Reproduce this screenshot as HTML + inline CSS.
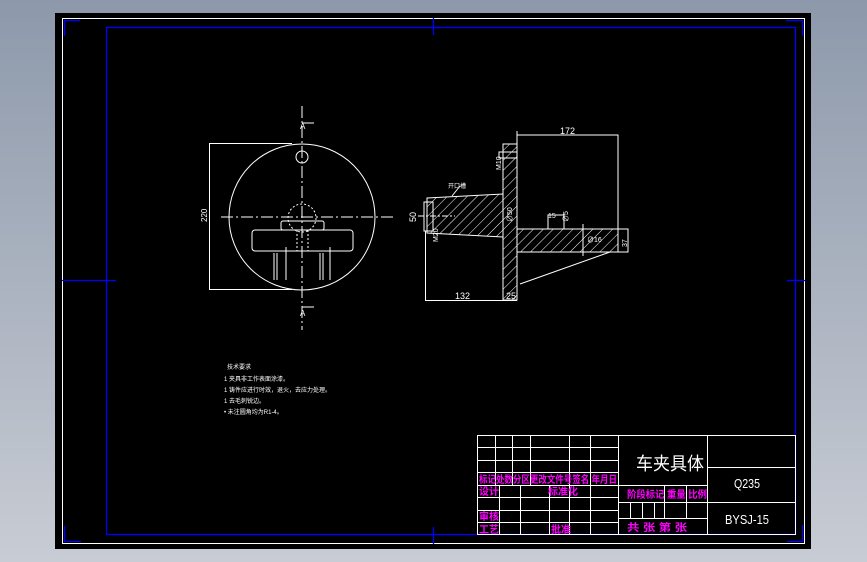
<!DOCTYPE html>
<html><head><meta charset="utf-8"><style>
html,body{margin:0;padding:0;width:867px;height:562px;overflow:hidden;background:linear-gradient(#8d99ab,#c8ccd4);}
svg{position:absolute;left:0;top:0}
text{font-family:"Liberation Sans","Noto Sans CJK SC",sans-serif}
</style></head><body>
<svg width="867" height="562" viewBox="0 0 867 562">
<defs>
<pattern id="h" patternUnits="userSpaceOnUse" width="7" height="7" patternTransform="rotate(45)">
<line x1="0" y1="0" x2="0" y2="7" stroke="#fff" stroke-width="1"/>
</pattern>
</defs>
<rect x="55" y="13" width="756" height="536" fill="#000"/>
<rect x="62.5" y="18.5" width="742" height="525" fill="none" stroke="#fff" stroke-width="1"/>
<rect x="106.5" y="27.5" width="689" height="507" fill="none" stroke="#0000ff" stroke-width="1.3"/>
<g stroke="#0000ff" stroke-width="1.3" fill="none">
<polyline points="80,20.5 64.5,20.5 64.5,36"/>
<polyline points="786,20.5 802.5,20.5 802.5,36"/>
<polyline points="64.5,526 64.5,541.5 81,541.5"/>
<polyline points="802.5,525 802.5,541.5 787,541.5"/>
<line x1="433.5" y1="18" x2="433.5" y2="35"/>
<line x1="433.5" y1="527" x2="433.5" y2="544"/>
<line x1="62" y1="280.5" x2="116" y2="280.5"/>
<line x1="787" y1="280.5" x2="805" y2="280.5"/>
</g>
<g stroke="#fff" stroke-width="1" fill="none">
<circle cx="302" cy="217" r="73"/>
<circle cx="302" cy="157" r="6"/>
<line x1="209.5" y1="143" x2="209.5" y2="290"/>
<line x1="209" y1="143.5" x2="292" y2="143.5"/>
<line x1="209" y1="289.5" x2="292" y2="289.5"/>
<line x1="302" y1="106" x2="302" y2="330" stroke-dasharray="12,3,2,3"/>
<line x1="221" y1="217" x2="395" y2="217" stroke-dasharray="12,3,2,3"/>
<circle cx="302" cy="218" r="14" stroke-dasharray="2,2"/>
<rect x="281" y="221" width="43" height="9" rx="2"/>
<rect x="252" y="230" width="101" height="21" rx="3"/>
<line x1="297" y1="230" x2="297" y2="251" stroke-dasharray="2,2"/>
<line x1="308" y1="230" x2="308" y2="251" stroke-dasharray="2,2"/>
<path d="M274,253V280M277,253V280M286,247V280M320,253V280M323,253V280M330,247V280"/>
<path d="M302,123H314M302,307H314"/>
<rect x="517" y="135" width="101" height="94"/>
<line x1="618" y1="229" x2="628" y2="229"/>
<rect x="503" y="144" width="14" height="156" fill="url(#h)"/>
<path d="M427,198 L503,194 L503,237 L427,233 Z" fill="url(#h)"/>
<rect x="424" y="202" width="9" height="29"/>
<line x1="418" y1="216" x2="455" y2="216" stroke-dasharray="6,2,2,2"/>
<path d="M517,229 H618 V252 H517 Z" fill="url(#h)"/>
<rect x="618" y="229" width="10" height="23"/>
<line x1="425.5" y1="231" x2="425.5" y2="300"/>
<line x1="425" y1="300.5" x2="517" y2="300.5"/>
<line x1="520" y1="284" x2="610" y2="252"/>
<line x1="583" y1="224" x2="583" y2="256"/>
<rect x="499" y="152" width="18" height="6"/>
<rect x="548" y="215" width="16" height="14"/>
<line x1="452" y1="196" x2="460" y2="186"/>
<line x1="517" y1="135" x2="517" y2="131"/>
</g>
<g fill="#fff" font-size="9">
<text x="300" y="129" font-size="8">A</text>
<text x="300" y="316" font-size="8">A</text>
<text x="207" y="222" font-size="8" transform="rotate(-90 207 222)">220</text>
<text x="560" y="134">172</text>
<text x="455" y="299">132</text>
<text x="506" y="299">25</text>
<text x="416" y="222" transform="rotate(-90 416 222)">50</text>
<text x="501" y="170" font-size="7" transform="rotate(-90 501 170)">M10</text>
<text x="512" y="222" font-size="7" transform="rotate(-90 512 222)">∅50</text>
<text x="548" y="218" font-size="7">15</text>
<text x="568" y="222" font-size="7" transform="rotate(-90 568 222)">∅5</text>
<text x="587" y="242" font-size="7">∅16</text>
<text x="627" y="247" font-size="7" transform="rotate(-90 627 247)">37</text>
<text x="438" y="242" font-size="7" transform="rotate(-90 438 242)">M20</text>
<text x="448" y="188" font-size="6">开口槽</text>
</g>
<g fill="#fff" font-size="6">
<text x="227" y="369">技术要求</text>
<text x="224" y="381">1 夹具非工作表面涂漆。</text>
<text x="224" y="392">1 铸件应进行时效，退火，去应力处理。</text>
<text x="224" y="403">1 去毛刺锐边。</text>
<text x="224" y="414">• 未注圆角均为R1-4。</text>
</g>
<g stroke="#fff" stroke-width="1" fill="none">
<rect x="477.5" y="435.5" width="318" height="99"/>
<path d="M477,447.5H618M477,460.5H618M477,472.5H618M477,485.5H707M477,497.5H618M477,510.5H618M477,522.5H618"/>
<path d="M495.5,435V485M512.5,435V485M530.5,435V485M569.5,435V534M590.5,435V534M618.5,435V534"/>
<path d="M499.5,485V534M520.5,485V534M549.5,485V534"/>
<path d="M707.5,435V534M618,502.5H707M618,518.5H707M707,467.5H795M707,502.5H795"/>
<path d="M664.5,485V518M686.5,485V518M630.5,502V518M642.5,502V518M654.5,502V518"/>
</g>
<g fill="#ff00ff" font-size="10" font-weight="bold">
<text x="479" y="483" textLength="138" lengthAdjust="spacingAndGlyphs">标记处数分区更改文件号签名 年月日</text>
<text x="479" y="495">设计</text>
<text x="548" y="495">标准化</text>
<text x="479" y="520">审核</text>
<text x="479" y="533">工艺</text>
<text x="551" y="533">批准</text>
<text x="627" y="498" textLength="80" lengthAdjust="spacingAndGlyphs">阶段标记 重量 比例</text>
<text x="627" y="531" textLength="60" lengthAdjust="spacingAndGlyphs">共  张 第  张</text>
</g>
<g fill="#fff">
<text x="636" y="470" font-size="18" textLength="68" lengthAdjust="spacingAndGlyphs">车夹具体</text>
<text x="734" y="488" font-size="13" textLength="26" lengthAdjust="spacingAndGlyphs">Q235</text>
<text x="725" y="524" font-size="13" textLength="44" lengthAdjust="spacingAndGlyphs">BYSJ-15</text>
</g>
</svg>
</body></html>
